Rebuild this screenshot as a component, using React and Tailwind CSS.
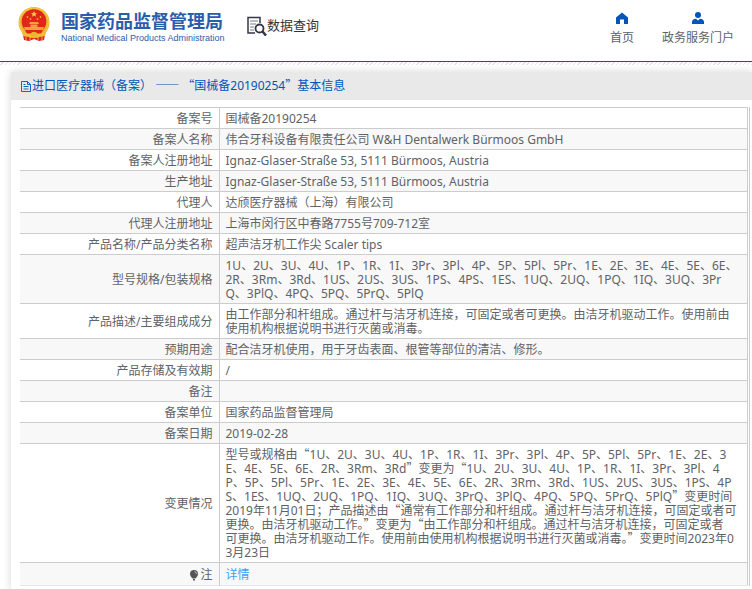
import { Fragment } from "react";

const rows = [
  { label: "备案号", value: "国械备20190254" },
  { label: "备案人名称", value: "伟合牙科设备有限责任公司 W&H Dentalwerk Bürmoos GmbH" },
  { label: "备案人注册地址", value: "Ignaz-Glaser-Straße 53, 5111 Bürmoos, Austria" },
  { label: "生产地址", value: "Ignaz-Glaser-Straße 53, 5111 Bürmoos, Austria" },
  { label: "代理人", value: "达颀医疗器械（上海）有限公司" },
  { label: "代理人注册地址", value: "上海市闵行区中春路7755号709-712室" },
  { label: "产品名称/产品分类名称", value: "超声洁牙机工作尖 Scaler tips" },
  {
    label: "型号规格/包装规格",
    value:
      "1U、2U、3U、4U、1P、1R、1I、3Pr、3Pl、4P、5P、5Pl、5Pr、1E、2E、3E、4E、5E、6E、\n2R、3Rm、3Rd、1US、2US、3US、1PS、4PS、1ES、1UQ、2UQ、1PQ、1IQ、3UQ、3Pr\nQ、3PlQ、4PQ、5PQ、5PrQ、5PlQ",
  },
  {
    label: "产品描述/主要组成成分",
    value: "由工作部分和杆组成。通过杆与洁牙机连接，可固定或者可更换。由洁牙机驱动工作。使用前由\n使用机构根据说明书进行灭菌或消毒。",
  },
  { label: "预期用途", value: "配合洁牙机使用，用于牙齿表面、根管等部位的清洁、修形。" },
  { label: "产品存储及有效期", value: "/" },
  { label: "备注", value: "" },
  { label: "备案单位", value: "国家药品监督管理局" },
  { label: "备案日期", value: "2019-02-28" },
  {
    label: "变更情况",
    value:
      "型号或规格由“1U、2U、3U、4U、1P、1R、1I、3Pr、3Pl、4P、5P、5Pl、5Pr、1E、2E、3\nE、4E、5E、6E、2R、3Rm、3Rd”变更为“1U、2U、3U、4U、1P、1R、1I、3Pr、3Pl、4\nP、5P、5Pl、5Pr、1E、2E、3E、4E、5E、6E、2R、3Rm、3Rd、1US、2US、3US、1PS、4P\nS、1ES、1UQ、2UQ、1PQ、1IQ、3UQ、3PrQ、3PlQ、4PQ、5PQ、5PrQ、5PlQ”变更时间\n2019年11月01日；产品描述由“通常有工作部分和杆组成。通过杆与洁牙机连接，可固定或者可\n更换。由洁牙机驱动工作。”变更为“由工作部分和杆组成。通过杆与洁牙机连接，可固定或者\n可更换。由洁牙机驱动工作。使用前由使用机构根据说明书进行灭菌或消毒。”变更时间2023年0\n3月23日",
  },
];

export default function App() {
  return (
    <div className="bg-white font-['Noto_Sans','Noto_Sans_CJK_SC',sans-serif] text-xs text-[#606266]" lang="zh-CN">
      <Header />
      <main className="ml-[11px] mt-[7px] bg-white pb-1 shadow-[0_0_8px_#d5d5d5]">
        <h1 className="flex h-7 items-center bg-[#e9e9e9] pl-[10px] text-[#0056b8]">
          <DocIcon />
          <span>
            <Quoted text="进口医疗器械（备案） —— “国械备20190254”基本信息" />
          </span>
        </h1>
        <div className="ml-[9px] mr-[2px] mt-[7px] border-r border-[#ccc] pr-px">
          <InfoTable />
        </div>
      </main>
    </div>
  );
}

function Header() {
  return (
    <header>
      <div className="flex h-[62px] items-start justify-between border-b border-[#0056b8] px-[18px]">
        <div className="flex items-start">
          <a href="#home" className="flex items-start gap-[11px] pt-[7px]">
            <Emblem />
            <span className="block w-40 whitespace-nowrap pt-[2px] text-[#2c5dab]">
              <span className="block font-['Noto_Sans_CJK_SC',sans-serif] text-[18px] font-bold leading-[22px]">国家药品监督管理局</span>
              <span className="block font-['Liberation_Sans',sans-serif] text-[9px] leading-[14px]">National Medical Products Administration</span>
            </span>
          </a>
          <a href="#search" className="ml-[26px] flex items-start pt-4 text-[13px] leading-[18px] text-[#333]">
            <SearchDocIcon />
            数据查询
          </a>
        </div>
        <nav className="flex gap-7 pt-3 leading-4">
          <a href="#index" className="flex flex-col items-center gap-[6px]">
            <HomeIcon />
            首页
          </a>
          <a href="#portal" className="flex flex-col items-center gap-[6px]">
            <UserIcon />
            政务服务门户
          </a>
        </nav>
      </div>
      <div className="h-[3px] bg-[repeating-linear-gradient(135deg,#fff_0_2px,#e4e4e4_2px_3px)]" />
    </header>
  );
}

function InfoTable() {
  return (
    <table className="w-full border-collapse border-b border-r border-t border-[#ccc] border-b-[#e6e6ee] leading-[14px]">
      <tbody>
        {rows.map((row, i) => (
          <tr key={row.label} className={i % 2 ? "bg-[#f8f8f8]" : "bg-white"}>
            <th scope="row" className="w-[199px] border-y border-r border-[#ccc] pb-[2px] pr-[6px] pt-1 text-right font-normal">
              {row.label}
            </th>
            <td className="h-[21px] whitespace-pre-line break-all border border-[#ccc] px-[6px] pb-[2px] pt-1">
              <Quoted text={row.value} />
            </td>
          </tr>
        ))}
        <tr className="bg-[#f8f8f8]">
          <th scope="row" className="border-r border-t border-[#ccc] pb-[3px] pr-[6px] pt-[5px] text-right font-normal">
            <span className="flex items-center justify-end">
              <BulbIcon />注
            </span>
          </th>
          <td className="border-t border-[#ccc] px-[6px] pb-[3px] pt-[5px]">
            <a href="#detail" className="text-[#409eff]">详情</a>
          </td>
        </tr>
      </tbody>
    </table>
  );
}

// Curly quotes take the full-width shape of the Chinese font
function Quoted({ text }) {
  return text.split(/([“”—]+)/).map((part, i) =>
    i % 2 ? (
      <span key={i} className="font-['Noto_Sans_CJK_SC',sans-serif] leading-[10px]">{part}</span>
    ) : (
      <Fragment key={i}>{part}</Fragment>
    )
  );
}

function Emblem() {
  return (
    <svg className="h-[34px] w-8" viewBox="0 0 32 34" aria-hidden="true">
      <path d="M4 23 6 33 11 34 16 32 21 34 26 33 28 23Z" fill="#d8261c" />
      <circle cx="16" cy="15.5" r="15.5" fill="#edb52f" />
      <circle cx="16" cy="15.5" r="14.3" fill="none" stroke="#f7d45c" strokeWidth="1" strokeDasharray="2 1" />
      <circle cx="16" cy="14.5" r="12.3" fill="#e02619" />
      <path d="m16 4 .9 2 2.100.2-1.600 1.400.5 2.100L16 8.600l-1.900 1.100.5-2.100L13 6.200l2.100-.2Z" fill="#f8cf45" />
      <g fill="#f5a13a">
        <circle cx="9.500" cy="10" r=".9" />
        <circle cx="12.500" cy="12" r=".9" />
        <circle cx="19.500" cy="12" r=".9" />
        <circle cx="22.500" cy="10" r=".9" />
        <path d="M12 15h8l1 2H11ZM12.500 17.500h7V20h-7ZM6 20h20l-1 3H7Z" />
      </g>
      <path d="M7 23.500h18l-2 3H9Z" fill="#e02619" />
      <path d="M4 24c3 3 7 4 10 2h4c3 2 7 1 10-2l-1 5c-3 1-6 1-8-1h-6c-2 2-5 2-8 1Z" fill="#f3bd34" />
      <circle cx="16" cy="28" r="3.200" fill="#edb52f" />
      <path d="M8 30v3M12 30v3M20 30v3M24 30v3" stroke="#f2b733" strokeWidth="1" />
    </svg>
  );
}

function SearchDocIcon() {
  return (
    <svg className="h-5 w-5" viewBox="0 0 20 20" fill="none" stroke="#333746" aria-hidden="true">
      <path d="M8 17H1V1.500h12V7" strokeWidth="1.500" />
      <path d="M3 5h8M3 8h6M3 11h4M3 14h4" strokeWidth="1" stroke="#777b86" />
      <circle cx="12.500" cy="12.500" r="4" strokeWidth="1.800" />
      <path d="m15.500 15.500 3.500 4" strokeWidth="2.500" />
    </svg>
  );
}

function HomeIcon() {
  return (
    <svg className="h-3 w-3" viewBox="0 0 12 12" fill="#0056b8" aria-hidden="true">
      <path d="M6 .5 0 5.500V12h4V7.500h4V12h4V5.500Z" />
    </svg>
  );
}

function UserIcon() {
  return (
    <svg className="h-3 w-3" viewBox="0 0 12 12" fill="#0056b8" aria-hidden="true">
      <circle cx="6" cy="3" r="3" />
      <path d="M0 12V10c0-2 1.500-3 4-3.300L6 8.500l2-1.800c2.500.3 4 1.300 4 3.300v2Z" />
    </svg>
  );
}

function DocIcon() {
  return (
    <svg className="h-3 w-[11px]" viewBox="0 0 11 12" fill="none" stroke="#0056b8" aria-hidden="true">
      <path d="M.5 1.500H6.500L9.500 4.500V11.500H.5ZM6.500 1.500V4.500H9.500M2.500 4.500H4.500M2.500 6.500H7.500M2.500 9H7.500" strokeWidth=".9" />
    </svg>
  );
}

function BulbIcon() {
  return (
    <svg className="mr-px h-3 w-[10px]" viewBox="0 0 10 12" aria-hidden="true">
      <path d="M5 1a4 4 0 0 1 4 4c0 2-1.500 3-2.500 4.500h-3C2.500 8 1 7 1 5a4 4 0 0 1 4-4ZM4 10h2v1.500H4Z" fill="#555" />
      <path d="M5.500 2.500Q7.500 3 7.500 5" stroke="#ddd" strokeWidth=".8" fill="none" />
    </svg>
  );
}
